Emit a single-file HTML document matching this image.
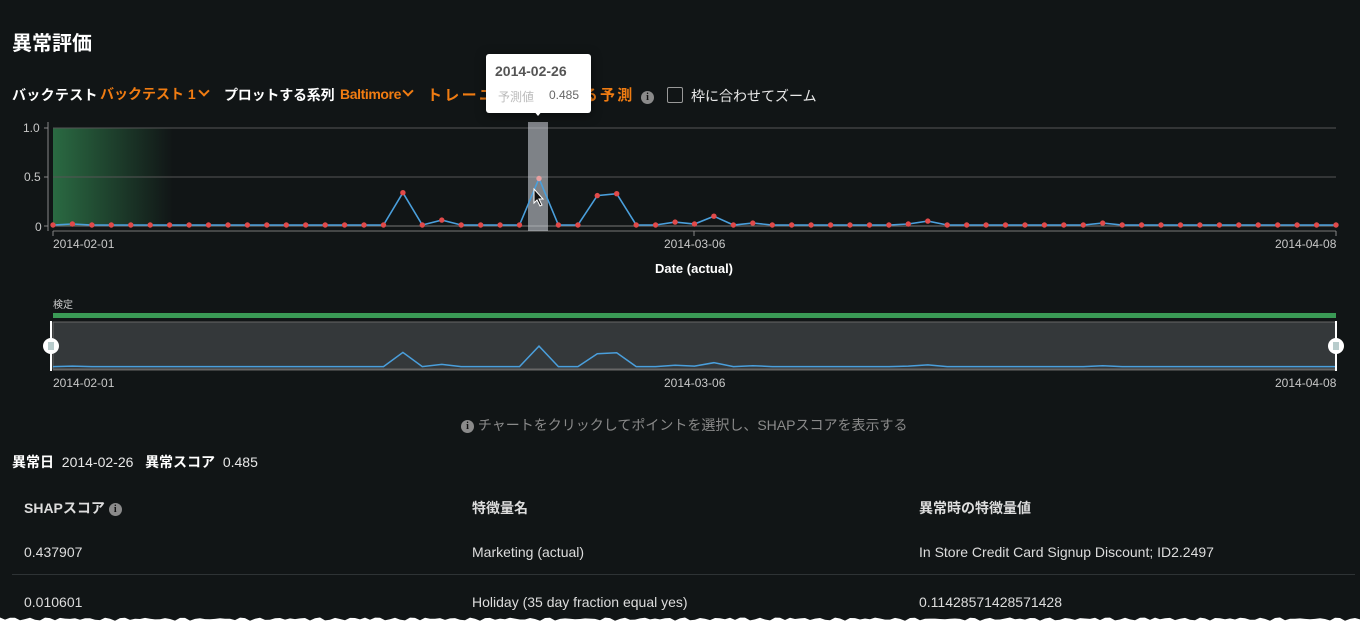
<!DOCTYPE html>
<html><head><meta charset="utf-8">
<style>
*{margin:0;padding:0;box-sizing:border-box}
body{width:1360px;height:626px;background:#111516;color:#e8e8e8;font-family:"Liberation Sans","Noto Sans CJK JP",sans-serif;position:relative;overflow:hidden}
.a{position:absolute;white-space:nowrap}
.or{color:#f07c12;font-weight:bold}
.b{font-weight:bold;color:#fff}
.info{display:inline-block;width:13px;height:13px;border-radius:50%;background:#8a8a8a;color:#111;font-size:10px;font-weight:bold;text-align:center;line-height:13px;font-family:"Liberation Serif",serif;vertical-align:-1px}
.cv{display:inline-block;width:8px;height:8px;border-right:2.5px solid #f07c12;border-bottom:2.5px solid #f07c12;transform:rotate(45deg);margin-left:4px;vertical-align:4px}
</style></head><body>
<div class="a b" style="left:12px;top:27px;font-size:20px">異常評価</div>
<div class="a b" style="left:12px;top:85px;font-size:14px;letter-spacing:0.3px">バックテスト</div>
<div class="a or" style="left:100px;top:84px;font-size:14px;letter-spacing:0px">バックテスト 1<span class="cv"></span></div>
<div class="a b" style="left:224px;top:85px;font-size:14px;letter-spacing:-0.2px">プロットする系列</div>
<div class="a or" style="left:340px;top:86px;font-size:14px;letter-spacing:-0.4px">Baltimore<span class="cv" style="margin-left:3px"></span></div>
<div class="a or" style="left:427px;top:84px;font-size:15px;letter-spacing:2.3px">トレーニングに対する予測</div>
<div class="a" style="left:641px;top:86px"><span class="info">i</span></div>
<div class="a" style="left:667px;top:87px;width:16px;height:16px;border:1px solid #999;border-radius:2px"></div>
<div class="a" style="left:691px;top:86px;font-size:14px;color:#e8e8e8">枠に合わせてズーム</div>

<svg class="a" style="left:0;top:0" width="1360" height="400">
<defs><linearGradient id="g" x1="0" x2="1"><stop offset="0" stop-color="#2a6a42"/><stop offset="1" stop-color="#2a6a42" stop-opacity="0"/></linearGradient></defs>
<rect x="53" y="128" width="120" height="98" fill="url(#g)"/>
<line x1="53" y1="128" x2="1336" y2="128" stroke="#555"/>
<line x1="53" y1="177" x2="1336" y2="177" stroke="#555"/>
<line x1="53" y1="226" x2="1336" y2="226" stroke="#777"/>
<line x1="53" y1="231" x2="1336" y2="231" stroke="#777"/>
<line x1="48" y1="122" x2="48" y2="231" stroke="#888"/>
<line x1="44" y1="128" x2="48" y2="128" stroke="#888"/>
<line x1="44" y1="177" x2="48" y2="177" stroke="#888"/>
<line x1="44" y1="226" x2="48" y2="226" stroke="#888"/>
<line x1="53" y1="231" x2="53" y2="236" stroke="#888"/>
<line x1="694" y1="231" x2="694" y2="236" stroke="#888"/>
<line x1="1336" y1="231" x2="1336" y2="236" stroke="#888"/>
<rect x="528" y="122" width="20" height="109" fill="#c8ccd4" fill-opacity="0.6"/>
<g id="main"></g>
<text x="23" y="132" fill="#c8c8c8" font-size="12">1.0</text>
<text x="24" y="181" fill="#c8c8c8" font-size="12">0.5</text>
<text x="35" y="231" fill="#c8c8c8" font-size="12">0</text>
<text x="53" y="248" fill="#c8c8c8" font-size="12">2014-02-01</text>
<text x="664" y="248" fill="#c8c8c8" font-size="12">2014-03-06</text>
<text x="1275" y="248" fill="#c8c8c8" font-size="12">2014-04-08</text>
<text x="694" y="273" fill="#fff" font-size="13" font-weight="bold" text-anchor="middle">Date (actual)</text>
<text x="53" y="308" fill="#ccc" font-size="10">検定</text>
<rect x="53" y="313" width="1283" height="5" fill="#3a9a55"/>
<rect x="53" y="322" width="1283" height="47" fill="#34383a" stroke="#666"/>
<g id="nav"></g>
<line x1="53" y1="370" x2="1336" y2="370" stroke="#666"/>
<line x1="51" y1="321" x2="51" y2="371" stroke="#fff" stroke-width="2"/>
<line x1="1336" y1="321" x2="1336" y2="371" stroke="#fff" stroke-width="2"/>
<circle cx="51" cy="346" r="8" fill="#fff"/><circle cx="1336" cy="346" r="8" fill="#fff"/>
<rect x="48" y="342" width="6" height="8" fill="#8aa" opacity="0.6"/><rect x="1333" y="342" width="6" height="8" fill="#8aa" opacity="0.6"/>
<text x="53" y="387" fill="#c8c8c8" font-size="12">2014-02-01</text>
<text x="664" y="387" fill="#c8c8c8" font-size="12">2014-03-06</text>
<text x="1275" y="387" fill="#c8c8c8" font-size="12">2014-04-08</text>
<path d="M534 189 L534 203 L537 200 L540 206 L542 205 L539 199 L543 199 Z" fill="#111" stroke="#fff" stroke-width="1"/>
</svg>

<div class="a" style="left:486px;top:54px;width:105px;height:59px;background:#fff;border-radius:3px;box-shadow:0 2px 10px rgba(0,0,0,.5)"></div>
<div class="a" style="left:533px;top:110px;width:0;height:0;border-left:5px solid transparent;border-right:5px solid transparent;border-top:6px solid #fff"></div>
<div class="a" style="left:495px;top:63px;font-size:14px;font-weight:bold;color:#555">2014-02-26</div>
<div class="a" style="left:498px;top:88px;font-size:12px;color:#bbb">予測値</div>
<div class="a" style="left:549px;top:88px;font-size:12px;color:#666">0.485</div>

<div class="a" style="left:461px;top:415px;font-size:14px;color:#8a8a8a"><span class="info" style="vertical-align:1px">i</span> チャートをクリックしてポイントを選択し、SHAPスコアを表示する</div>
<div class="a" style="left:12px;top:452px;font-size:14px"><b class="b">異常日</b>&nbsp; 2014-02-26&nbsp;&nbsp; <b class="b">異常スコア</b>&nbsp; 0.485</div>
<div class="a" style="left:24px;top:498px;font-size:14px;font-weight:bold;color:#ddd">SHAPスコア <span class="info" style="vertical-align:1px">i</span></div>
<div class="a" style="left:472px;top:498px;font-size:14px;font-weight:bold;color:#ddd">特徴量名</div>
<div class="a" style="left:919px;top:498px;font-size:14px;font-weight:bold;color:#ddd">異常時の特徴量値</div>
<div class="a" style="left:24px;top:544px;font-size:14px;color:#ddd">0.437907</div>
<div class="a" style="left:472px;top:544px;font-size:14px;color:#ddd">Marketing (actual)</div>
<div class="a" style="left:919px;top:544px;font-size:14px;color:#ddd">In Store Credit Card Signup Discount; ID2.2497</div>
<div class="a" style="left:12px;top:574px;width:1343px;height:1px;background:#2e3335"></div>
<div class="a" style="left:24px;top:594px;font-size:14px;color:#ddd">0.010601</div>
<div class="a" style="left:472px;top:594px;font-size:14px;color:#ddd">Holiday (35 day fraction equal yes)</div>
<div class="a" style="left:919px;top:594px;font-size:14px;color:#ddd">0.11428571428571428</div>
<svg class="a" style="left:0;top:612px" width="1360" height="14" id="torn"></svg>
<script>
var v=[];for(var i=0;i<67;i++)v.push(0.01);
v[1]=0.02;v[18]=0.34;v[20]=0.06;v[25]=0.485;v[28]=0.31;v[29]=0.33;v[32]=0.04;v[33]=0.02;v[34]=0.10;v[36]=0.03;v[44]=0.02;v[45]=0.05;v[54]=0.03;
function X(i){return 53+i*(1283/66)}
var p="",q="";
for(i=0;i<67;i++){p+=(i?"L":"M")+X(i).toFixed(1)+" "+(226-v[i]*98).toFixed(1);q+=(i?"L":"M")+X(i).toFixed(1)+" "+(367-v[i]*43).toFixed(1);}
var m=document.getElementById("main");
var s='<path d="'+p+'" fill="none" stroke="#4a9fdc" stroke-width="1.6"/>';
for(i=0;i<67;i++){s+='<circle cx="'+X(i).toFixed(1)+'" cy="'+(226-v[i]*98).toFixed(1)+'" r="2.7" fill="'+(i==25?'#e7a0a0':'#e04a4a')+'"/>';}
m.innerHTML=s;
document.getElementById("nav").innerHTML='<path d="'+q+'" fill="none" stroke="#4a9fdc" stroke-width="1.5"/>';
var t="M0 14 L0 8";for(var x=0;x<=1360;x+=5){t+=" L"+x+" "+(5.5+Math.abs(Math.sin(x*0.37)*1.8+Math.sin(x*1.3)*1.5)).toFixed(1);}t+=" L1360 14 Z";
document.getElementById("torn").innerHTML='<path d="'+t+'" fill="#fff"/>';
</script>
</body></html>
